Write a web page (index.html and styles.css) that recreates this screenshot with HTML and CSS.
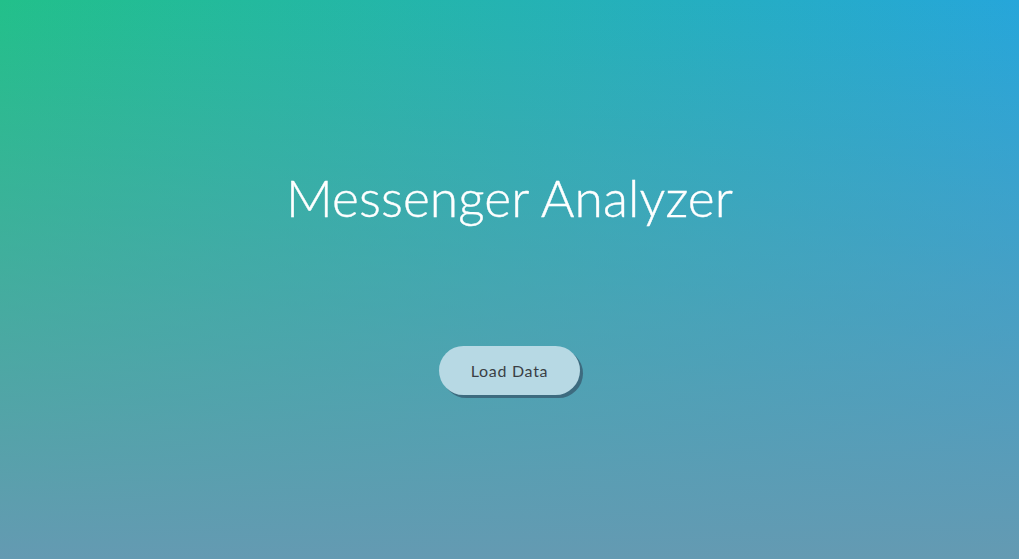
FILE: index.html
```html
<!DOCTYPE html>
<html>
<head>
<meta charset="utf-8">
<link rel="stylesheet" href="styles.css">
</head>
<body>
<main class="page">
  <h1 class="title">Messenger Analyzer</h1>
  <button class="load-btn">Load Data</button>
</main>
</body>
</html>
```
FILE: styles.css
```css
html, body {
  margin: 0;
  padding: 0;
  height: 100%;
}
body {
  font-family: Lato, "Open Sans", sans-serif;
  background:
    linear-gradient(to bottom, rgba(100, 154, 178, 0) 0%, rgba(100, 154, 178, 1) 100%),
    linear-gradient(to right, #22c08a 0%, #26a6da 100%);
  overflow: hidden;
}
.page {
  height: 100%;
  display: flex;
  flex-direction: column;
  align-items: center;
  padding-top: 163px;
  box-sizing: border-box;
}
.title {
  margin: 0;
  font-weight: 300;
  font-size: 51.5px;
  line-height: 68px;
  color: #ffffff;
  letter-spacing: 0.1px;
  -webkit-text-stroke: 0.4px #ffffff;
}
.load-btn {
  margin-top: 115px;
  width: 141px;
  height: 49px;
  border: none;
  border-radius: 25px;
  background: #b7d9e4;
  color: #3a3f44;
  font-family: Lato, "Open Sans", sans-serif;
  font-size: 16px;
  letter-spacing: 0.7px;
  box-shadow: 3px 3px 0 #3d6b7f;
  cursor: pointer;
}
```
